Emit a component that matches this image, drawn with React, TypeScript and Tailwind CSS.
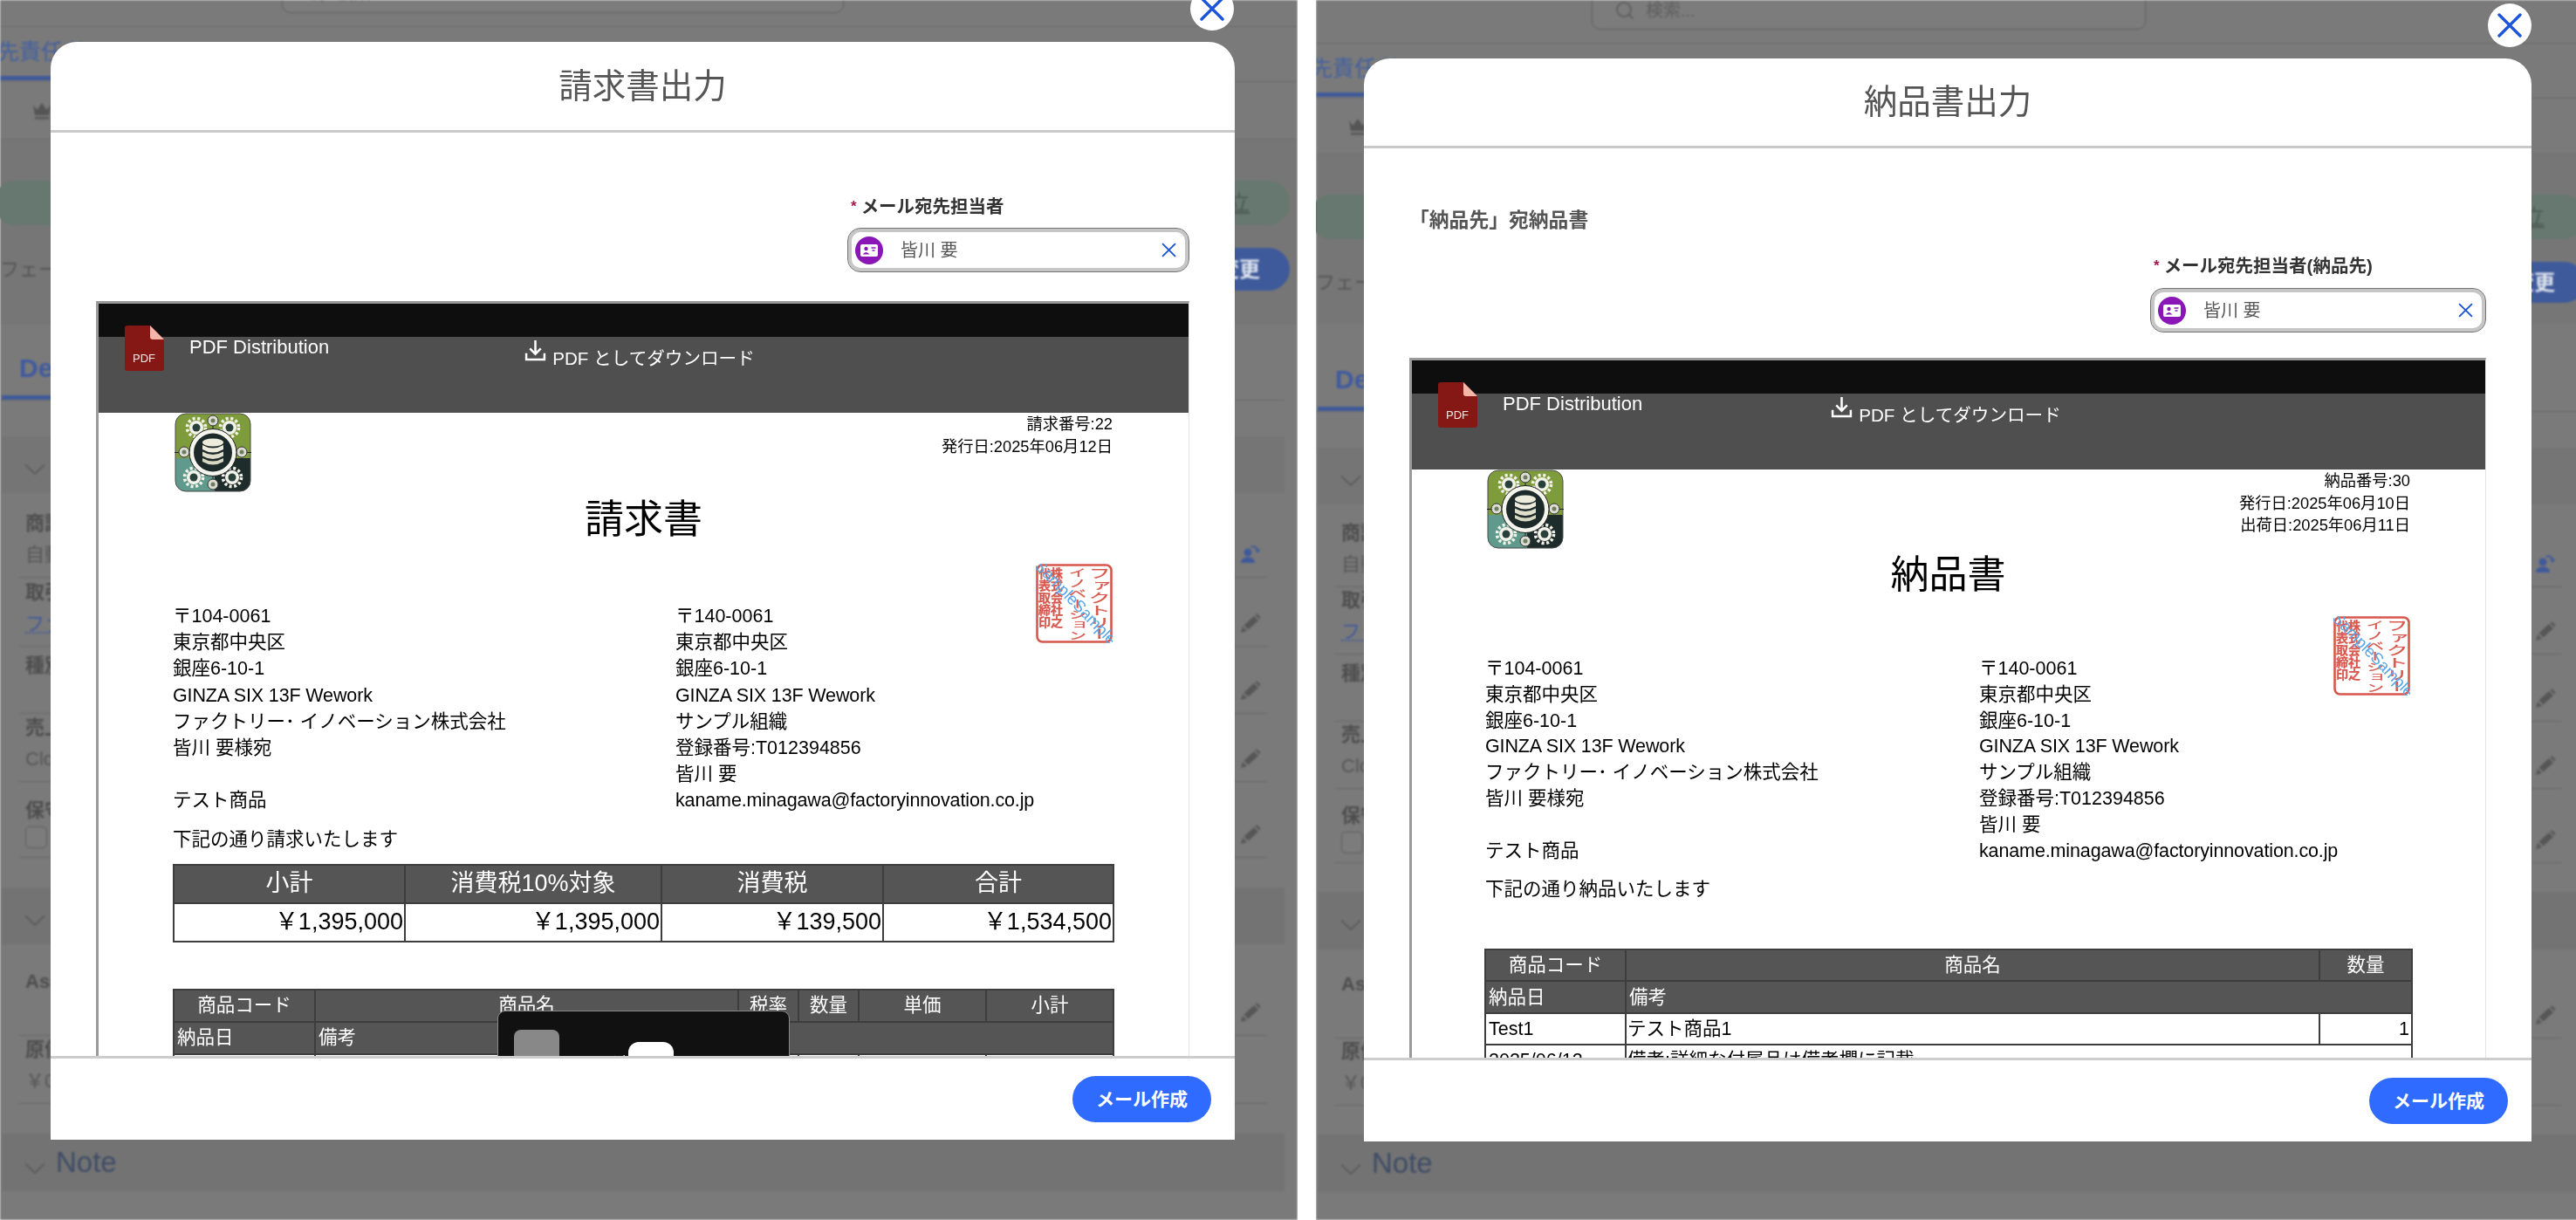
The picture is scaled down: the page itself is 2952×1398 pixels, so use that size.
import React from "react";
import { Search } from "lucide-react";

const FONT = "font-['Liberation_Sans','Noto_Sans_CJK_JP',sans-serif]";

type Cfg = {
  wrap: string; panel: string; top: string; search: string; tab: string; crown: string; statusTop: string; pill: string; statusGap: string; btn: string; statusEnd: string;
  det: string; detGap: string; acc1: string; f1: string; f2: string; f3: string; f4: string; f5: string; gap1: string; acc2: string; f6: string; f7: string; gap2: string;
  tabText: string; pad: string; lineEnd: string;
};

const L: Cfg = {
  wrap: "w-[1487px]", panel: "w-[1487px]", top: "h-[31px]", search: "ml-[323px] w-[644px]", tab: "h-[63px]", crown: "h-[66px]", statusTop: "h-[47px]", pill: "h-[51px]", statusGap: "h-[26px]", btn: "h-[49px]", statusEnd: "h-[39px]",
  det: "h-[87px]", detGap: "h-[41px]", acc1: "h-[65px]", f1: "h-[97px]", f2: "h-[79px]", f3: "h-[77px]", f4: "h-[78px]", f5: "h-[87px]", gap1: "h-[34px]", acc2: "h-[65px]", f6: "h-[105px]", f7: "h-[78px]", gap2: "h-[34px]",
  tabText: "-ml-[3px]", pad: "pl-[29px]", lineEnd: "mr-[35px]",
};
const R: Cfg = {
  wrap: "w-[1463px]", panel: "w-[1444px]", top: "h-[50px]", search: "ml-[316px] w-[635px]", tab: "h-[63px]", crown: "h-[64px]", statusTop: "h-[46px]", pill: "h-[51px]", statusGap: "h-[26px]", btn: "h-[47px]", statusEnd: "h-[24px]",
  det: "h-[101px]", detGap: "h-[41px]", acc1: "h-[65px]", f1: "h-[95px]", f2: "h-[77px]", f3: "h-[77px]", f4: "h-[77px]", f5: "h-[85px]", gap1: "h-[33px]", acc2: "h-[66px]", f6: "h-[102px]", f7: "h-[77px]", gap2: "h-[33px]",
  tabText: "-ml-[6px]", pad: "pl-[26px]", lineEnd: "mr-[35px]",
};

function Chevron() {
  return (
    <svg viewBox="0 0 24 14" className="w-[24px] h-[14px] shrink-0" fill="none" stroke="#555" strokeWidth="1.6">
      <path d="M1 1.5 L12 12 L23 1.5" />
    </svg>
  );
}

function Pencil() {
  return (
    <svg viewBox="0 0 24 24" className="w-[24px] h-[24px] shrink-0" fill="#565656">
      <path d="M1 23 L3 16 L8 21 Z M4.5 14.5 L16 4 L21 9 L9.5 19.5 Z M17.5 2.8 L19.5 1.2 L23.5 5.2 L22 7.5 Z" />
    </svg>
  );
}

function Reassign() {
  return (
    <svg viewBox="0 0 24 24" className="w-[24px] h-[24px] shrink-0" fill="#3f5a9a">
      <circle cx="9" cy="10" r="4.5" />
      <path d="M1 22 C1 17 5 15.5 9 15.5 C13 15.5 17 17 17 22 Z" />
      <path d="M12 3 C16 1 20 3 21 7 L23.5 6 L20.5 11 L17 7.5 L19 7.2 C18 4.6 15 3.4 12.6 4.6 Z" />
    </svg>
  );
}

function Field({ h, cfg, label, value, icon, blue, check }: { h: string; cfg: Cfg; label: string; value?: string; icon?: "pencil" | "user"; blue?: boolean; check?: boolean }) {
  return (
    <div className={`${h} ${cfg.lineEnd} ml-[22px] flex border-b border-[#676767]`}>
      <div className="flex-1 pl-[7px] pt-[7px] flex flex-col justify-end pb-[10px]">
        <div className="text-[22px] leading-[30px] font-bold text-[#4d4d4d]">{label}</div>
        {value ? (
          <div className={`text-[22px] leading-[30px] mt-[6px] ${blue ? "text-[#40599c] underline decoration-dotted" : "text-[#565656]"}`}>{value}</div>
        ) : check ? (
          <div className="w-[25px] h-[25px] mt-[3px] rounded-[5px] border border-[#5d5d5d] bg-[#7c7c7c]" />
        ) : (
          <div className="h-[36px]" />
        )}
      </div>
      <div className="flex items-end pb-[14px] pr-[7px]">{icon === "pencil" ? <Pencil /> : icon === "user" ? <Reassign /> : null}</div>
    </div>
  );
}

function Background({ cfg }: { cfg: Cfg }) {
  return (
    <div className={`${cfg.wrap} h-[1398px] bg-[#7a7a7a] text-[#4d4d4d] blur-[0.8px] flex flex-col`}>
      <div className={`${cfg.top} shrink-0 border-b border-[#6c6c6c] flex items-end pb-[15px] overflow-hidden`}>
        <div className={`${cfg.search} shrink-0 h-[44px] rounded-[10px] border border-[#5f5f5f] bg-[#7c7c7c] flex items-center gap-[12px] pl-[25px]`}>
          <Search className="w-[24px] h-[24px] text-[#5a5a5a]" strokeWidth={1.6} />
          <span className="text-[20px] text-[#5e5e5e]">検索...</span>
        </div>
      </div>
      <div className={`${cfg.tab} shrink-0 border-b border-[#6c6c6c] flex items-end`}>
        <div className="w-[167px] h-full border-r-0 relative overflow-hidden flex flex-col justify-end">
          <div className={`${cfg.tabText} text-[25px] leading-[30px] text-[#43609f] whitespace-nowrap mb-[13px]`}>先責任者</div>
          <div className="h-[5px] bg-[#3f5a9a] mb-[1px]" />
        </div>
      </div>
      <div className={`${cfg.crown} shrink-0 bg-[#7a7a7a] border-b border-[#6f6f6f] flex items-center pl-[36px]`}>
        <svg viewBox="0 0 24 24" className="w-[24px] h-[24px]" fill="#555">
          <path d="M2 5 L6.5 11 L12 3 L17.5 11 L22 5 L20 17 L4 17 Z M4 19 H20 V21.5 H4 Z" />
        </svg>
      </div>
      <div className="shrink-0 bg-[#767676] flex flex-col">
        <div className={cfg.statusTop} />
        <div className={`${cfg.pill} -ml-[8px] mr-[9px] rounded-[26px] bg-[#66786f] flex items-center justify-end pr-[46px]`}>
          <span className="text-[24px] underline text-[#4a5a52]">確立</span>
        </div>
        <div className={cfg.statusGap} />
        <div className={`${cfg.btn} flex items-center justify-between pl-0 mr-[9px]`}>
          <span className="text-[22px] text-[#545454] whitespace-nowrap">フェーズ</span>
          <span className="h-full w-[300px] rounded-[26px] bg-[#3f5a9a] text-[#dfe4ef] text-[24px] font-bold flex items-center justify-end pr-[34px]">フェーズを変更</span>
        </div>
        <div className={cfg.statusEnd} />
      </div>
      <div className={`${cfg.det} shrink-0 relative border-b border-[#6c6c6c] mr-[15px] flex flex-col justify-end`}>
        <div className="ml-[22px] text-[30px] leading-[36px] font-bold text-[#3f5aa0] mb-[13px]">Details</div>
        <div className="ml-[2px] w-[160px] h-[5px] bg-[#3f5a9a]" />
      </div>
      <div className={`${cfg.detGap} shrink-0`} />
      <div className={`${cfg.acc1} shrink-0 ml-[2px] mr-[15px] bg-[#757575] flex items-center pl-[26px] pt-[10px]`}>
        <Chevron />
      </div>
      <Field h={cfg.f1} cfg={cfg} label="商談名" value="自動作成" icon="user" />
      <Field h={cfg.f2} cfg={cfg} label="取引先" value="ファクトリー" blue icon="pencil" />
      <Field h={cfg.f3} cfg={cfg} label="種別" icon="pencil" />
      <Field h={cfg.f4} cfg={cfg} label="売上" value="Closed" icon="pencil" />
      <Field h={cfg.f5} cfg={cfg} label="保守" check icon="pencil" />
      <div className={`${cfg.gap1} shrink-0`} />
      <div className={`${cfg.acc2} shrink-0 ml-[2px] mr-[15px] bg-[#737373] flex items-center pl-[26px] pt-[10px]`}>
        <Chevron />
      </div>
      <Field h={cfg.f6} cfg={cfg} label="Assign" icon="pencil" />
      <Field h={cfg.f7} cfg={cfg} label="原価" value="￥0" />
      <div className={`${cfg.gap2} shrink-0`} />
      <div className="h-[66px] shrink-0 ml-[2px] mr-[15px] bg-[#737373] flex items-center gap-[12px] pl-[26px]">
        <span className="pt-[14px]"><Chevron /></span>
        <span className="text-[33px] text-[#3e4c66] font-medium">Note</span>
      </div>
    </div>
  );
}

function PdfIcon() {
  return (
    <svg viewBox="0 0 45 52" className="w-[45px] h-[52px] shrink-0">
      <path d="M3 0 H29 L45 16 V49 Q45 52 42 52 H3 Q0 52 0 49 V3 Q0 0 3 0 Z" fill="#851814" />
      <path d="M29 0 L45 16 H32 Q29 16 29 13 Z" fill="#f3b6a8" />
      <text x="22" y="42" textAnchor="middle" fontSize="13" fill="#f4e6e4" fontFamily="Liberation Sans">PDF</text>
    </svg>
  );
}

function Toolbar({ dlClass }: { dlClass: string }) {
  return (
    <div className="relative">
      <div className="h-[38px] bg-[#0e0e0e]" />
      <div className="h-[87px] bg-[#4f4f4f]" />
      <div className="absolute inset-0 flex items-start pl-[30px] pt-[25px]">
        <PdfIcon />
        <span className="ml-[29px] mt-[12px] text-[22px] leading-[26px] text-white whitespace-nowrap">PDF Distribution</span>
        <div className={`${dlClass} flex items-start gap-[7px] text-white whitespace-nowrap`}>
          <svg viewBox="0 0 24 24" className="w-[25px] h-[25px] shrink-0" fill="none" stroke="#fff" strokeWidth="2.4">
            <path d="M12 1 V15 M6 10 L12 16 L18 10" />
            <path d="M2 15 V22 H22 V15" />
          </svg>
          <span className="text-[20.6px] leading-[26px] mt-[9px]">PDF としてダウンロード</span>
        </div>
      </div>
    </div>
  );
}

function Logo({ id }: { id: string }) {
  const gears = [[25, 17], [63, 17], [22, 74], [66, 74]];
  const dots = [[44, 9], [44, 82], [11, 45], [77, 45]];
  return (
    <svg viewBox="0 0 88 91" className="w-[88px] h-[91px] shrink-0 ml-[2px]">
      <defs>
        <clipPath id={id}><rect x="1" y="1" width="86" height="89" rx="12" /></clipPath>
      </defs>
      <g clipPath={`url(#${id})`}>
        <rect width="88" height="52" fill="#7f9c3c" />
        <rect y="52" width="46" height="39" fill="#5f9a8c" />
        <rect x="46" y="52" width="42" height="39" fill="#1f2c2c" />
      </g>
      <rect x="1" y="1" width="86" height="89" rx="12" fill="none" stroke="#4a4a4a" strokeWidth="1" />
      {gears.map(([x, y], i) => (
        <g key={i}>
          <circle cx={x} cy={y} r="10.5" fill="none" stroke="#f2f2ea" strokeWidth="3.6" strokeDasharray="3 2.6" />
          <circle cx={x} cy={y} r="8" fill="#f2f2ea" />
          <circle cx={x} cy={y} r="4.5" fill="#27403a" />
        </g>
      ))}
      <path d="M0 45.5 H88 M44 5 V86" stroke="#222" strokeWidth="1" />
      {dots.map(([x, y], i) => (
        <g key={i}>
          <circle cx={x} cy={y} r="6" fill="#dcdcd2" stroke="#333" strokeWidth="1" />
          <circle cx={x} cy={y} r="2.5" fill="#6d7d60" />
        </g>
      ))}
      <circle cx="44" cy="45.5" r="27" fill="#f5f5ee" stroke="#222" strokeWidth="1" />
      <circle cx="44" cy="45.5" r="22" fill="#1d2a2a" />
      <ellipse cx="44" cy="34" rx="12" ry="4.5" fill="#ecebdc" />
      <path d="M32 37 Q44 44 56 37 V42 Q44 49 32 42 Z" fill="#ecebdc" />
      <path d="M32 44.5 Q44 51.5 56 44.5 V49.5 Q44 56.5 32 49.5 Z" fill="#e0dfcb" />
      <path d="M32 52 Q44 59 56 52 V56 Q44 63 32 56 Z" fill="#d8d7c2" />
    </svg>
  );
}

function Stamp({ pos }: { pos: string }) {
  const v = "[writing-mode:vertical-rl]";
  return (
    <svg viewBox="0 0 88 91" className={`absolute w-[88px] h-[91px] ${pos}`}>
      <rect x="1.5" y="1.5" width="85" height="88" rx="6" fill="#fff" stroke="#d8574c" strokeWidth="2.6" />
      <g fill="#d8574c" stroke="#d8574c" strokeWidth="0.25" fontFamily="Noto Sans CJK JP">
        <text transform="translate(73,4) scale(1.8,1)" fontSize="14" className={v}>ファクトリー</text>
        <text transform="translate(48,4) scale(1.7,1)" fontSize="12" className={v}>イノベーション</text>
        <text transform="translate(24,4) scale(1,1)" fontSize="14" fontWeight="700" className={v}>株式会社之</text>
        <text transform="translate(10,4) scale(1,1)" fontSize="14" fontWeight="700" className={v}>代表取締印</text>
      </g>
      <text x="1" y="4" transform="rotate(46 0 0)" fontSize="18.5" fill="#58a6e8" fontFamily="Liberation Sans">SampleSample</text>
    </svg>
  );
}

const LINES_A = ["〒104-0061", "東京都中央区", "銀座6-10-1", "GINZA SIX 13F Wework", "ファクトリー･ イノベーション株式会社", "皆川 要様宛", "\u00a0", "テスト商品"];
const LINES_B = ["〒140-0061", "東京都中央区", "銀座6-10-1", "GINZA SIX 13F Wework", "サンプル組織", "登録番号:T012394856", "皆川 要", "kaname.minagawa@factoryinnovation.co.jp"];

function Line({ t }: { t: string }) {
  const latin = /^[A-Za-z0-9 .@]+$/.test(t);
  return <div className={`whitespace-nowrap ${latin ? "tracking-[-0.13px]" : ""}`}>{t}</div>;
}

function Address({ col, lead }: { col: string; lead: string }) {
  return (
    <div className={`grid ${col} text-[21.5px] ${lead} text-black`}>
      <div>{LINES_A.map((t, i) => <Line key={i} t={t} />)}</div>
      <div>{LINES_B.map((t, i) => <Line key={i} t={t} />)}</div>
    </div>
  );
}

const TH = "bg-[#555555] text-white font-normal border-2 border-[#3d3d3d] text-center p-0";
const TD = "bg-white text-black font-normal border-2 border-[#3d3d3d] p-0";

function Modal({ title, pos, closePos, head, body, btnPr }: { title: string; pos: string; closePos: string; head: string; body: React.ReactNode; btnPr: string }) {
  return (
    <>
      <div className={`absolute ${pos} flex flex-col bg-white rounded-t-[30px] overflow-hidden blur-[0.4px]`}>
        <div className={`${head} shrink-0 border-b-[3px] border-[#c9c9c9] flex items-center justify-center text-[38.5px] text-[#555555]`}>{title}</div>
        <div className="flex-1 min-h-0 overflow-hidden">{body}</div>
        <div className={`h-[96px] shrink-0 border-t-[3px] border-[#cdcdcd] flex items-start justify-end pt-[20px] ${btnPr}`}>
          <div className="w-[159px] h-[53px] rounded-[27px] bg-[#2f6bff] text-white text-[21px] font-bold flex items-center justify-center">メール作成</div>
        </div>
      </div>
      <div className={`absolute ${closePos} w-[50px] h-[50px] rounded-full bg-white flex items-center justify-center blur-[0.4px]`}>
        <svg viewBox="0 0 28 28" className="w-[28px] h-[28px]" fill="none" stroke="#1d55d8" strokeWidth="3.4" strokeLinecap="round">
          <path d="M2 2 L26 26 M26 2 L2 26" />
        </svg>
      </div>
    </>
  );
}

function Contact({ label, width, mt, gap }: { label: string; width: string; mt: string; gap: string }) {
  return (
    <div className={`flex flex-col items-end ${mt}`}>
      <div className={width}>
        <div className="flex items-center gap-[5px] h-[26px] pl-[4px] text-[20.5px] font-bold text-[#333] whitespace-nowrap">
          <span className="text-[#a3174f] text-[17px]">*</span>
          <span>{label}</span>
        </div>
        <div className={`${gap} h-[51px] rounded-[15px] border border-[#737373] shadow-[inset_0_0_0_4px_#c6c6c6] flex items-center pl-[8px] pr-[14px]`}>
          <span className="w-[32px] h-[32px] rounded-full bg-[#8a16b8] flex items-center justify-center shrink-0">
            <svg viewBox="0 0 20 16" className="w-[20px] h-[16px]">
              <rect x="0" y="1" width="20" height="14" rx="2" fill="#fff" />
              <circle cx="6.5" cy="6" r="2.2" fill="#8a16b8" />
              <path d="M2.5 12.5 Q6.5 7.5 10.5 12.5 Z" fill="#8a16b8" />
              <path d="M12.5 5 H17.5 M13.5 8 H16.5" stroke="#8a16b8" strokeWidth="1.4" />
            </svg>
          </span>
          <span className="ml-[20px] flex-1 text-[20px] text-[#555]">皆川 要</span>
          <svg viewBox="0 0 16 16" className="w-[17px] h-[17px]" fill="none" stroke="#1d55d8" strokeWidth="1.8">
            <path d="M1 1 L15 15 M15 1 L1 15" />
          </svg>
        </div>
      </div>
    </div>
  );
}

function Invoice() {
  const heads = ["小計", "消費税10%対象", "消費税", "合計"];
  const vals = ["￥1,395,000", "￥1,395,000", "￥139,500", "￥1,534,500"];
  return (
    <div className="pt-[72px] px-[52px]">
      <Contact label="メール宛先担当者" width="w-[392px]" mt="" gap="mt-[11px]" />
      <div className="relative mt-[33px] border-t-[3px] border-l-[3px] border-r border-t-[#9a9a9a] border-l-[#9a9a9a] border-r-[#e4e4e4]">
        <Toolbar dlClass="ml-[224px] mt-[16px]" />
        <div className="px-[85px]">
          <div className="flex justify-between h-[91px] pr-[2px]">
            <Logo id="lg-a" />
            <div className="text-right text-[18.3px] leading-[26px] text-black">
              <div>請求番号:22</div>
              <div>発行日:2025年06月12日</div>
            </div>
          </div>
          <div className="h-[64px] flex items-center justify-center text-[45px] text-black">請求書</div>
          <div className="relative mt-[63px]">
            <Stamp pos="right-[2px] -top-[45px]" />
            <Address col="grid-cols-[576px_1fr]" lead="leading-[30.2px]" />
          </div>
          <div className="mt-[14px] text-[21.5px] leading-[30px] text-black">下記の通り請求いたします</div>
          <table className="mt-[13px] w-[1077px] table-fixed border-collapse text-[27px]">
            <colgroup>
              <col className="w-[265px]" /><col className="w-[294px]" /><col className="w-[254px]" /><col className="w-[264px]" />
            </colgroup>
            <tbody>
              <tr className="h-[44px]">{heads.map((h) => <th key={h} className={TH}>{h}</th>)}</tr>
              <tr className="h-[44px]">{vals.map((v, i) => <td key={i} className={`${TD} text-right pr-[1px]`}>{v}</td>)}</tr>
            </tbody>
          </table>
          <table className="mt-[53px] w-[1077px] table-fixed border-collapse text-[21.5px]">
            <colgroup>
              <col className="w-[162px]" /><col className="w-[485px]" /><col className="w-[69px]" /><col className="w-[69px]" /><col className="w-[146px]" /><col className="w-[146px]" />
            </colgroup>
            <tbody>
              <tr className="h-[37px]">{["商品コード", "商品名", "税率", "数量", "単価", "小計"].map((h) => <th key={h} className={TH}>{h}</th>)}</tr>
              <tr className="h-[37px]">
                <th className={`${TH} text-left pl-[3px]`}>納品日</th>
                <th colSpan={5} className={`${TH} text-left pl-[3px]`}>備考</th>
              </tr>
              <tr className="h-[37px]">{[0, 1, 2, 3, 4, 5].map((i) => <td key={i} className={TD} />)}</tr>
            </tbody>
          </table>
        </div>
        <div className="absolute left-[457px] top-[810px] w-[335px] h-[200px] rounded-[9px] bg-[#111111] border border-[#8a8a8a]">
          <div className="absolute left-[18px] top-[21px] w-[52px] h-[52px] rounded-[8px] bg-[#888888]" />
          <span className="absolute left-[88px] top-[47px] text-[20px] leading-[24px] text-white whitespace-nowrap">ページ</span>
          <div className="absolute left-[149px] top-[35px] w-[52px] h-[52px] rounded-[12px] bg-white flex justify-center pt-[11px] text-[20px] leading-[24px] text-black">1</div>
          <span className="absolute left-[212px] top-[47px] text-[20px] leading-[24px] text-white whitespace-nowrap">/ 1</span>
        </div>
      </div>
    </div>
  );
}

function Delivery() {
  return (
    <div className="pt-[67px] px-[52px]">
      <div className="text-[22.8px] leading-[30px] font-bold text-[#555] whitespace-nowrap">「納品先」宛納品書</div>
      <Contact label="メール宛先担当者(納品先)" width="w-[385px]" mt="mt-[25px]" gap="mt-[12px]" />
      <div className="relative mt-[29px] border-t-[3px] border-l-[3px] border-r border-t-[#9a9a9a] border-l-[#9a9a9a] border-r-[#e4e4e4]">
        <Toolbar dlClass="ml-[216px] mt-[16px]" />
        <div className="pl-[84px] pr-[85px]">
          <div className="flex justify-between h-[90px] pr-[1px]">
            <Logo id="lg-b" />
            <div className="text-right text-[18.3px] leading-[25.5px] text-black">
              <div>納品番号:30</div>
              <div>発行日:2025年06月10日</div>
              <div>出荷日:2025年06月11日</div>
            </div>
          </div>
          <div className="h-[62px] flex items-center justify-center text-[44px] text-black">納品書</div>
          <div className="relative mt-[62px]">
            <Stamp pos="right-[1px] -top-[46px]" />
            <Address col="grid-cols-[566px_1fr]" lead="leading-[29.8px]" />
          </div>
          <div className="mt-[14px] text-[21.5px] leading-[30px] text-black">下記の通り納品いたします</div>
          <table className="mt-[53px] -ml-[1px] w-[1062px] table-fixed border-collapse text-[21.5px]">
            <colgroup>
              <col className="w-[161px]" /><col className="w-[795px]" /><col className="w-[106px]" />
            </colgroup>
            <tbody>
              <tr className="h-[36px]">{["商品コード", "商品名", "数量"].map((h) => <th key={h} className={TH}>{h}</th>)}</tr>
              <tr className="h-[37px]">
                <th className={`${TH} text-left pl-[3px]`}>納品日</th>
                <th colSpan={2} className={`${TH} text-left pl-[3px]`}>備考</th>
              </tr>
              <tr className="h-[36px]">
                <td className={`${TD} pl-[3px]`}>Test1</td>
                <td className={`${TD} pl-[1px]`}>テスト商品1</td>
                <td className={`${TD} text-right pr-[2px]`}>1</td>
              </tr>
              <tr className="h-[36px]">
                <td className={`${TD} pl-[3px]`}>2025/06/12</td>
                <td colSpan={2} className={`${TD} pl-[1px]`}>備考:詳細な付属品は備考欄に記載</td>
              </tr>
            </tbody>
          </table>
        </div>
      </div>
    </div>
  );
}

export default function App() {
  return (
    <div className={`w-[2952px] h-[1398px] flex bg-white overflow-hidden ${FONT}`}>
      <div className="relative w-[1487px] h-[1398px] shrink-0 overflow-hidden">
        <Background cfg={L} />
        <Modal title="請求書出力" pos="left-[58px] top-[48px] w-[1357px] h-[1258px]" closePos="left-[1364px] -top-[15px]" head="h-[104px]" btnPr="pr-[27px]" body={<Invoice />} />
      </div>
      <div className="w-[21px] shrink-0" />
      <div className="relative w-[1444px] h-[1398px] shrink-0 overflow-hidden">
        <Background cfg={R} />
        <Modal title="納品書出力" pos="left-[55px] top-[67px] w-[1338px] h-[1241px]" closePos="left-[1343px] top-[4px]" head="h-[103px]" btnPr="pr-[27px]" body={<Delivery />} />
      </div>
    </div>
  );
}
